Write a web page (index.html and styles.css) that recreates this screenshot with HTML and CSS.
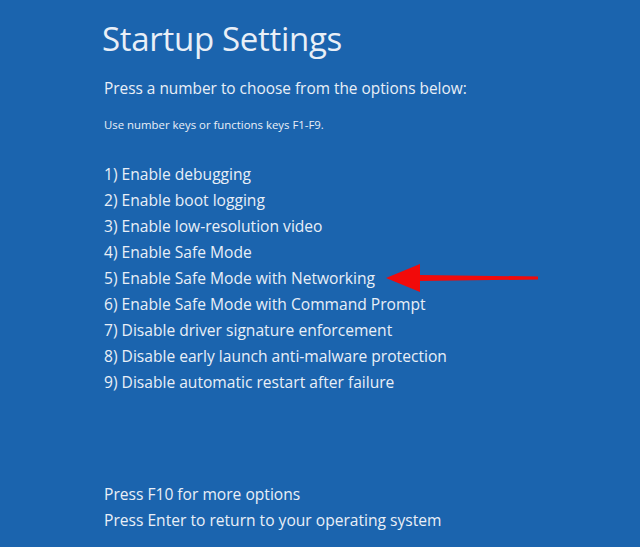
FILE: index.html
```html
<!DOCTYPE html>
<html lang="en">
<head>
    <meta charset="UTF-8">
    <title>Startup Settings</title>
    <link rel="stylesheet" href="styles.css">
</head>
<body>
    <div class="screen">
        <h1>Startup Settings</h1>
        <p class="lead">Press a number to choose from the options below:</p>
        <p class="hint">Use number keys or functions keys F1-F9.</p>

        <ul class="options">
            <li>1) Enable debugging</li>
            <li>2) Enable boot logging</li>
            <li>3) Enable low-resolution video</li>
            <li>4) Enable Safe Mode</li>
            <li class="marked">5) Enable Safe Mode with Networking
                <svg class="arrow" width="160" height="28" viewBox="0 0 160 28">
                    <path d="M152 12.5 L34 11 L34 0 L0 14 L34 28 L34 17 L152 15.5 Z" fill="#f20a0a"/>
                </svg>
            </li>
            <li>6) Enable Safe Mode with Command Prompt</li>
            <li>7) Disable driver signature enforcement</li>
            <li>8) Disable early launch anti-malware protection</li>
            <li>9) Disable automatic restart after failure</li>
        </ul>

        <div class="footer">
            <p>Press F10 for more options</p>
            <p>Press Enter to return to your operating system</p>
        </div>
    </div>
</body>
</html>
```

FILE: styles.css
```css
body {
    margin: 0;
    background: #1b64ae;
    color: #e9eff7;
    font-family: "Open Sans", "Noto Sans", sans-serif;
    height: 547px;
    overflow: hidden;
}

.screen {
    padding: 16px 0 0 102px;
}

h1 {
    margin: 0;
    font-size: 33px;
    font-weight: 400;
    line-height: 46px;
    letter-spacing: -0.3px;
}

.lead {
    margin: 15px 0 0 2px;
    font-size: 15.4px;
    line-height: 24px;
}

.hint {
    margin: 16px 0 0 2px;
    font-size: 11.4px;
    line-height: 16px;
}

.options {
    list-style: none;
    margin: 28px 0 0 2px;
    padding: 0;
    font-size: 15.6px;
    line-height: 26px;
}

.marked {
    position: relative;
}

.arrow {
    position: absolute;
    top: -1px;
    left: 282px;
}

.footer {
    margin-top: 86px;
    margin-left: 2px;
    font-size: 15.6px;
    line-height: 26px;
}

.footer p {
    margin: 0;
}
```
